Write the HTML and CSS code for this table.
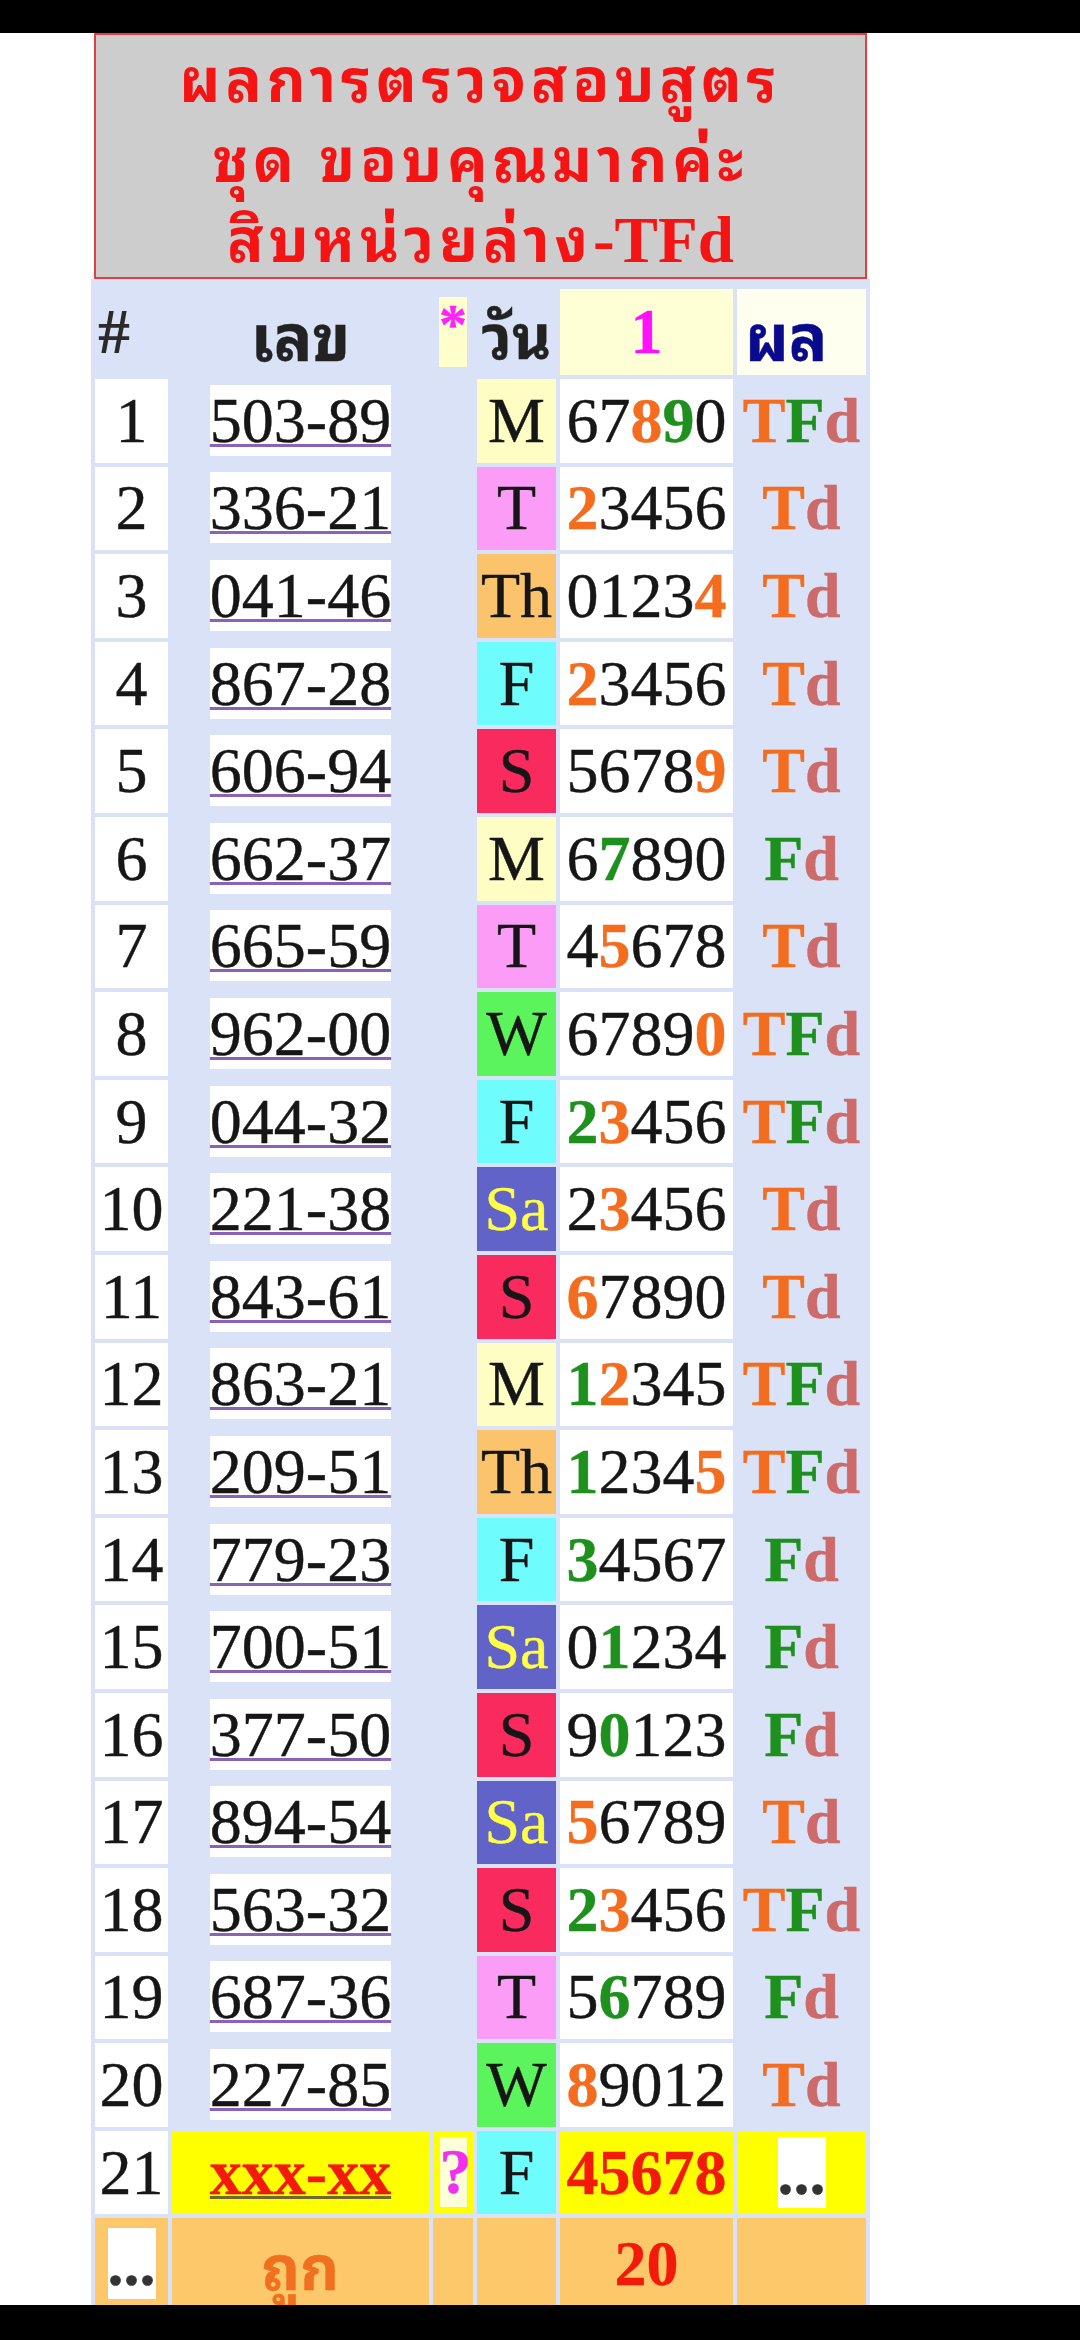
FILE: index.html
```html
<!DOCTYPE html>
<html lang="th">
<head>
<meta charset="utf-8">
<title>ผลการตรวจสอบสูตร</title>
<link rel="stylesheet" href="styles.css">
</head>
<body>
<div class="topbar"></div>
<div class="sheet">
  <div class="title">
    <div class="tline">ผลการตรวจสอบสูตร</div>
    <div class="tline">ชุด ขอบคุณมากค่ะ</div>
    <div class="tline">สิบหน่วยล่าง<span class="latin">-TFd</span></div>
  </div>
  <table class="grid">
    <colgroup>
      <col class="w-no"><col class="w-num"><col class="w-star"><col class="w-day"><col class="w-val"><col class="w-res">
    </colgroup>
    <thead>
      <tr>
        <th class="h-no">#</th>
        <th class="h-th h-big">เลข</th>
        <th class="h-star"><span class="star">*</span></th>
        <th class="h-th">วัน</th>
        <th class="h-one">1</th>
        <th class="h-res">ผล</th>
      </tr>
    </thead>
    <tbody>
      <tr><td class="n">1</td><td class="num"><a class="lnk">503-89</a></td><td></td><td class="d mon">M</td><td class="v">67<b class="o">8</b><b class="g">9</b>0</td><td class="r"><b class="o">T</b><b class="g">F</b><b class="p">d</b></td></tr>
      <tr><td class="n">2</td><td class="num"><a class="lnk">336-21</a></td><td></td><td class="d tue">T</td><td class="v"><b class="o">2</b>3456</td><td class="r"><b class="o">T</b><b class="p">d</b></td></tr>
      <tr><td class="n">3</td><td class="num"><a class="lnk">041-46</a></td><td></td><td class="d thu">Th</td><td class="v">0123<b class="o">4</b></td><td class="r"><b class="o">T</b><b class="p">d</b></td></tr>
      <tr><td class="n">4</td><td class="num"><a class="lnk">867-28</a></td><td></td><td class="d fri">F</td><td class="v"><b class="o">2</b>3456</td><td class="r"><b class="o">T</b><b class="p">d</b></td></tr>
      <tr><td class="n">5</td><td class="num"><a class="lnk">606-94</a></td><td></td><td class="d sun">S</td><td class="v">5678<b class="o">9</b></td><td class="r"><b class="o">T</b><b class="p">d</b></td></tr>
      <tr><td class="n">6</td><td class="num"><a class="lnk">662-37</a></td><td></td><td class="d mon">M</td><td class="v">6<b class="g">7</b>890</td><td class="r"><b class="g">F</b><b class="p">d</b></td></tr>
      <tr><td class="n">7</td><td class="num"><a class="lnk">665-59</a></td><td></td><td class="d tue">T</td><td class="v">4<b class="o">5</b>678</td><td class="r"><b class="o">T</b><b class="p">d</b></td></tr>
      <tr><td class="n">8</td><td class="num"><a class="lnk">962-00</a></td><td></td><td class="d wed">W</td><td class="v">6789<b class="o">0</b></td><td class="r"><b class="o">T</b><b class="g">F</b><b class="p">d</b></td></tr>
      <tr><td class="n">9</td><td class="num"><a class="lnk">044-32</a></td><td></td><td class="d fri">F</td><td class="v"><b class="g">2</b><b class="o">3</b>456</td><td class="r"><b class="o">T</b><b class="g">F</b><b class="p">d</b></td></tr>
      <tr><td class="n">10</td><td class="num"><a class="lnk">221-38</a></td><td></td><td class="d sat">Sa</td><td class="v">2<b class="o">3</b>456</td><td class="r"><b class="o">T</b><b class="p">d</b></td></tr>
      <tr><td class="n">11</td><td class="num"><a class="lnk">843-61</a></td><td></td><td class="d sun">S</td><td class="v"><b class="o">6</b>7890</td><td class="r"><b class="o">T</b><b class="p">d</b></td></tr>
      <tr><td class="n">12</td><td class="num"><a class="lnk">863-21</a></td><td></td><td class="d mon">M</td><td class="v"><b class="g">1</b><b class="o">2</b>345</td><td class="r"><b class="o">T</b><b class="g">F</b><b class="p">d</b></td></tr>
      <tr><td class="n">13</td><td class="num"><a class="lnk">209-51</a></td><td></td><td class="d thu">Th</td><td class="v"><b class="g">1</b>234<b class="o">5</b></td><td class="r"><b class="o">T</b><b class="g">F</b><b class="p">d</b></td></tr>
      <tr><td class="n">14</td><td class="num"><a class="lnk">779-23</a></td><td></td><td class="d fri">F</td><td class="v"><b class="g">3</b>4567</td><td class="r"><b class="g">F</b><b class="p">d</b></td></tr>
      <tr><td class="n">15</td><td class="num"><a class="lnk">700-51</a></td><td></td><td class="d sat">Sa</td><td class="v">0<b class="g">1</b>234</td><td class="r"><b class="g">F</b><b class="p">d</b></td></tr>
      <tr><td class="n">16</td><td class="num"><a class="lnk">377-50</a></td><td></td><td class="d sun">S</td><td class="v">9<b class="g">0</b>123</td><td class="r"><b class="g">F</b><b class="p">d</b></td></tr>
      <tr><td class="n">17</td><td class="num"><a class="lnk">894-54</a></td><td></td><td class="d sat">Sa</td><td class="v"><b class="o">5</b>6789</td><td class="r"><b class="o">T</b><b class="p">d</b></td></tr>
      <tr><td class="n">18</td><td class="num"><a class="lnk">563-32</a></td><td></td><td class="d sun">S</td><td class="v"><b class="g">2</b><b class="o">3</b>456</td><td class="r"><b class="o">T</b><b class="g">F</b><b class="p">d</b></td></tr>
      <tr><td class="n">19</td><td class="num"><a class="lnk">687-36</a></td><td></td><td class="d tue">T</td><td class="v">5<b class="g">6</b>789</td><td class="r"><b class="g">F</b><b class="p">d</b></td></tr>
      <tr><td class="n">20</td><td class="num"><a class="lnk">227-85</a></td><td></td><td class="d wed">W</td><td class="v"><b class="o">8</b>9012</td><td class="r"><b class="o">T</b><b class="p">d</b></td></tr>
      <tr class="next">
        <td class="n">21</td>
        <td class="num hl"><a class="lnk lnk-next">xxx-xx</a></td>
        <td class="hl q-cell"><span class="q">?</span></td>
        <td class="d fri">F</td>
        <td class="v hl red-bold">45678</td>
        <td class="r hl"><span class="dots">...</span></td>
      </tr>
      <tr class="foot">
        <td class="ft"><span class="dots">...</span></td>
        <td class="ft hit">ถูก</td>
        <td class="ft"></td>
        <td class="ft"></td>
        <td class="ft red-bold">20</td>
        <td class="ft"></td>
      </tr>
    </tbody>
  </table>
</div>
<div class="bottombar"></div>
</body>
</html>
```

FILE: styles.css
```css
* { box-sizing: border-box; }

html, body {
  margin: 0;
  padding: 0;
  background: #ffffff;
}

body {
  font-family: "Liberation Serif", "Noto Sans Thai Looped", "Noto Sans Thai", "Loma", "Garuda", serif;
  color: #161616;
}

.topbar {
  height: 33px;
  background: #000000;
}

.bottombar {
  position: fixed;
  left: 0;
  right: 0;
  bottom: 0;
  height: 35px;
  background: #000000;
}

.sheet {
  width: 779px;
  margin-left: 91px;
}

.title {
  margin: 0 3px;
  height: 246px;
  border: 2px solid #e53c3c;
  background: #cdcdcd;
  color: #f41414;
  font-family: "Noto Sans Thai Looped", "Noto Sans Thai", "Loma", "Garuda", sans-serif;
  font-weight: bold;
  font-size: 60px;
  letter-spacing: 5px;
  text-align: center;
  white-space: nowrap;
  display: flex;
  flex-direction: column;
  justify-content: center;
}

.tline {
  height: 80px;
  line-height: 78px;
}

.title .latin {
  font-family: "Liberation Serif", serif;
  font-size: 65px;
  letter-spacing: 0;
}

.grid {
  width: 779px;
  table-layout: fixed;
  border-collapse: separate;
  border-spacing: 4px;
  background: #d9e2f6;
  font-size: 64px;
  padding-top: 6px;
  margin-top: 0;
}

.w-no { width: 73px; }
.w-num { width: 257px; }
.w-star { width: 40px; }
.w-day { width: 79px; }
.w-val { width: 173px; }
.w-res { width: 129px; }

.grid th,
.grid td {
  height: 83.6px;
  padding: 0;
  line-height: 72px;
  text-align: center;
  vertical-align: middle;
  white-space: nowrap;
  -webkit-text-stroke: 0.4px currentColor;
}

.grid th {
  height: 86px;
  font-weight: bold;
  color: #222222;
}

.grid .h-no {
  text-align: left;
  padding-left: 3px;
  color: #2a2a2a;
  -webkit-text-stroke: 0;
}

.grid .h-th {
  font-family: "Noto Sans Thai Looped", "Noto Sans Thai", "Loma", "Garuda", sans-serif;
  font-size: 60px;
}

.grid .h-big { font-size: 64px; }

.grid .h-star {
  vertical-align: top;
  padding-top: 8px;
}

.star {
  display: inline-block;
  vertical-align: top;
  width: 28px;
  height: 70px;
  line-height: 56px;
  background: #ffffcc;
  color: #ff22ff;
  font-size: 56px;
}

.grid .h-one {
  background: #ffffd6;
  color: #ff10ff;
}

.grid .h-res {
  background: #fffff0;
  color: #0a0a8c;
  text-align: left;
  padding-left: 8px;
  font-family: "Noto Sans Thai Looped", "Noto Sans Thai", "Loma", "Garuda", sans-serif;
  font-size: 64px;
}

.n { background: #ffffff; }

.lnk {
  background: #ffffff;
  color: #161616;
  text-decoration: underline;
  text-decoration-color: #8a63b8;
  text-decoration-thickness: 3px;
}

.v { background: #ffffff; }

.mon { background: #fdfdc4; }
.tue { background: #fb9df6; }
.thu { background: #fbc46c; }
.fri { background: #6ffcfc; }
.sun { background: #f92a5e; }
.wed { background: #5cf45c; }
.sat { background: #6163c9; color: #ffff45; }

.o { color: #f46c1e; }
.g { color: #1e901e; }
.p { color: #cd6a6a; }

.r b { font-weight: bold; }

.hl { background: #ffff00; }

.lnk-next {
  background: transparent;
  color: #f21a0a;
  font-weight: bold;
  text-decoration-color: #6f6a2a;
}

.grid .q-cell { padding: 0 5px; }

.q {
  display: inline-block;
  vertical-align: top;
  width: 27px;
  background: #ffffd8;
  color: #f030f0;
  font-weight: bold;
  line-height: 70px;
}

.red-bold {
  color: #f21a0a;
  font-weight: bold;
}

.dots {
  background: #ffffff;
  color: #333333;
  font-weight: bold;
}

.grid .foot td {
  vertical-align: top;
  padding-top: 10px;
  height: 140px;
  line-height: 71px;
}

.ft { background: #fcc86a; }

.grid .hit {
  color: #f07020;
  font-weight: bold;
  font-family: "Noto Sans Thai Looped", "Noto Sans Thai", "Loma", "Garuda", sans-serif;
  font-size: 60px;
  line-height: 64px;
  padding-top: 4px;
}
```
